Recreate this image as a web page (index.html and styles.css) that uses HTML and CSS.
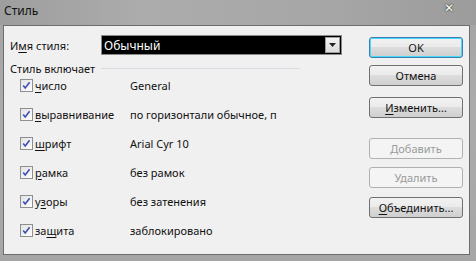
FILE: index.html
```html
<!DOCTYPE html>
<html lang="ru">
<head>
    <meta charset="UTF-8">
    <title>Стиль</title>
    <link rel="stylesheet" href="styles.css">
</head>
<body>
    <div class="window">
        <div class="titlebar">
            <span class="title">Стиль</span>
            <span class="close">✕</span>
        </div>
        <div class="client">
            <div class="left">
                <div class="name-row">
                    <span class="name-label">И<u>м</u>я стиля:</span>
                    <div class="combo">
                        <span class="combo-text">Обычный</span>
                        <span class="combo-btn">
                            <svg width="7" height="4" viewBox="0 0 7 4"><path d="M0 0h7L3.5 4z" fill="#222"/></svg>
                        </span>
                    </div>
                </div>

                <div class="group-head">
                    <span>Стиль включает</span>
                    <span class="group-line"></span>
                </div>

                <div class="items">
                    <div class="item">
                        <span class="check"><svg width="13" height="13" viewBox="0 0 13 13"><path d="M3.2 6.6l2 2.4L9.6 3.2" stroke="#3b4fb5" stroke-width="1.6" fill="none"/></svg></span>
                        <span class="item-name"><u>ч</u>исло</span>
                        <span class="item-value">General</span>
                    </div>
                    <div class="item">
                        <span class="check"><svg width="13" height="13" viewBox="0 0 13 13"><path d="M3.2 6.6l2 2.4L9.6 3.2" stroke="#3b4fb5" stroke-width="1.6" fill="none"/></svg></span>
                        <span class="item-name"><u>в</u>ыравнивание</span>
                        <span class="item-value">по горизонтали обычное, п</span>
                    </div>
                    <div class="item">
                        <span class="check"><svg width="13" height="13" viewBox="0 0 13 13"><path d="M3.2 6.6l2 2.4L9.6 3.2" stroke="#3b4fb5" stroke-width="1.6" fill="none"/></svg></span>
                        <span class="item-name"><u>ш</u>рифт</span>
                        <span class="item-value">Arial Cyr 10</span>
                    </div>
                    <div class="item">
                        <span class="check"><svg width="13" height="13" viewBox="0 0 13 13"><path d="M3.2 6.6l2 2.4L9.6 3.2" stroke="#3b4fb5" stroke-width="1.6" fill="none"/></svg></span>
                        <span class="item-name"><u>р</u>амка</span>
                        <span class="item-value">без рамок</span>
                    </div>
                    <div class="item">
                        <span class="check"><svg width="13" height="13" viewBox="0 0 13 13"><path d="M3.2 6.6l2 2.4L9.6 3.2" stroke="#3b4fb5" stroke-width="1.6" fill="none"/></svg></span>
                        <span class="item-name">у<u>з</u>оры</span>
                        <span class="item-value">без затенения</span>
                    </div>
                    <div class="item">
                        <span class="check"><svg width="13" height="13" viewBox="0 0 13 13"><path d="M3.2 6.6l2 2.4L9.6 3.2" stroke="#3b4fb5" stroke-width="1.6" fill="none"/></svg></span>
                        <span class="item-name">за<u>щ</u>ита</span>
                        <span class="item-value">заблокировано</span>
                    </div>
                </div>
            </div>

            <div class="buttons">
                <button class="btn default">OK</button>
                <button class="btn cancel">Отмена</button>
                <button class="btn modify"><u>И</u>зменить...</button>
                <button class="btn add" disabled>Добавить</button>
                <button class="btn remove" disabled>Удалить</button>
                <button class="btn merge"><u>О</u>бъединить...</button>
            </div>
        </div>
    </div>
</body>
</html>
```

FILE: styles.css
```css
body {
    margin: 0;
    font-family: "Noto Sans", "DejaVu Sans", sans-serif;
    font-size: 11px;
    color: #111;
}
u {
    text-decoration: underline;
    text-underline-offset: 2px;
}
.window {
    width: 476px;
    height: 261px;
    background: linear-gradient(to bottom, #a3a3a3, #ababab 40%, #a6a6a6);
    display: flex;
    flex-direction: column;
}
.titlebar {
    height: 25px;
    display: flex;
    align-items: center;
    justify-content: space-between;
    padding: 0 22px 0 4px;
    background: linear-gradient(to right, #9e9e9e, #acacac 30%, #a6a6a6 70%, #9c9c9c);
}
.title {
    font-size: 12px;
    color: #111;
    margin-top: -4px;
}
.close {
    color: #fff;
    font-size: 12px;
    font-weight: bold;
    text-shadow: 0 0 2px #333, 0 0 1px #333;
    margin-top: -10px;
}
.client {
    flex: 1;
    margin: 0 6px 6px 3px;
    border: 1px solid #6d6d6d;
    background: #f0f0f0;
    display: flex;
    padding: 9px 0 0 6px;
}
.left {
    width: 340px;
}
.name-row {
    display: flex;
    align-items: center;
    height: 20px;
}
.name-label {
    width: 91px;
}
.combo {
    width: 239px;
    height: 18px;
    border: 1px solid #8a8a8a;
    background: #000;
    display: flex;
    align-items: center;
    justify-content: space-between;
}
.combo-text {
    color: #fff;
    font-size: 12px;
    padding-left: 2px;
}
.combo-btn {
    width: 15px;
    height: 16px;
    margin-right: 1px;
    background: linear-gradient(to bottom, #f4f4f4, #dcdcdc);
    border: 1px solid #9c9c9c;
    box-sizing: border-box;
    display: flex;
    align-items: center;
    justify-content: center;
}
.group-head {
    display: flex;
    align-items: center;
    margin-top: 4px;
    height: 18px;
}
.group-line {
    flex: 1;
    margin-right: 50px;
    border-top: 1px solid #d5dbe0;
    margin-left: 6px;
}
.items {
    margin-top: -6px;
}
.item {
    display: flex;
    align-items: center;
    height: 29px;
}
.check {
    width: 13px;
    height: 13px;
    margin-left: 10px;
    border: 1px solid #8e8f8f;
    box-sizing: border-box;
    background: linear-gradient(135deg, #e2e2e2, #fff);
    display: flex;
}
.check svg {
    margin: -1px;
}
.item-name {
    width: 95px;
    margin-left: 2px;
}
.item-value {
    white-space: nowrap;
}
.buttons {
    display: flex;
    flex-direction: column;
    margin-left: 19px;
    padding-top: 2px;
}
.btn {
    width: 94px;
    height: 21px;
    font-family: inherit;
    font-size: 11px;
    color: #111;
    border: 1px solid #707070;
    border-radius: 3px;
    background: linear-gradient(to bottom, #f2f2f2 0%, #ebebeb 45%, #dddddd 50%, #cfcfcf 100%);
    padding: 0;
}
.btn.default {
    border-color: #3c7fb1;
    box-shadow: inset 0 0 0 1px #48d8fb;
}
.btn.cancel {
    margin-top: 7px;
}
.btn.modify {
    margin-top: 11px;
}
.btn.add {
    margin-top: 20px;
}
.btn.remove {
    margin-top: 8px;
}
.btn.merge {
    margin-top: 9px;
}
.btn:disabled {
    color: #9a9a9a;
    border-color: #adb2b5;
    background: #f4f4f4;
}
```
